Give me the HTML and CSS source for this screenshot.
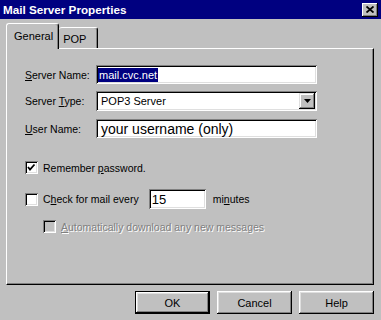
FILE: index.html
```html
<!DOCTYPE html>
<html>
<head>
<meta charset="utf-8">
<link rel="stylesheet" href="styles.css">
</head>
<body>
<div class="window">
  <div class="titlebar">
    <span class="title">Mail Server Properties</span>
    <div class="close"><svg width="8" height="7" viewBox="0 0 8 7"><path d="M0.5 0.5 L7.5 6.5 M7.5 0.5 L0.5 6.5" stroke="#000" stroke-width="1.8" fill="none"/></svg></div>
  </div>
  <div class="client">
    <div class="tabs">
      <div class="tab active">General</div>
      <div class="tab pop">POP</div>
    </div>
    <div class="panel">
      <div class="row r1">
        <span class="lbl"><u>S</u>erver Name:</span>
        <div class="field name"><span class="sel">mail.cvc.net</span></div>
      </div>
      <div class="row r2">
        <span class="lbl">Server <u>T</u>ype:</span>
        <div class="field select"><span>POP3 Server</span><div class="drop"><svg width="7" height="4" viewBox="0 0 7 4"><polygon points="0,0 7,0 3.5,4" fill="#000"/></svg></div></div>
      </div>
      <div class="row r3">
        <span class="lbl"><u>U</u>ser Name:</span>
        <div class="field user"><span>your username (only)</span></div>
      </div>
      <div class="check c1">
        <div class="box"><svg width="13" height="13" viewBox="0 0 13 13"><polyline points="3,6 5,8.5 9.5,3.5" stroke="#000" stroke-width="1.8" fill="none"/></svg></div>
        <span>Remember <u>p</u>assword.</span>
      </div>
      <div class="check c2">
        <div class="box"></div>
        <span>C<u>h</u>eck for mail every</span>
        <div class="field mins"><span>15</span></div>
        <span class="minutes">mi<u>n</u>utes</span>
      </div>
      <div class="check c3 disabled">
        <div class="box"></div>
        <span><u>A</u>utomatically download any new messages</span>
      </div>
    </div>
    <div class="buttons">
      <div class="btn default">OK</div>
      <div class="btn">Cancel</div>
      <div class="btn">Help</div>
    </div>
  </div>
</div>
</body>
</html>
```
FILE: styles.css
```css
* { box-sizing: border-box; }
body {
  margin: 0;
  width: 381px;
  height: 320px;
  overflow: hidden;
  background: #c0c0c0;
  font: 10.5px "Liberation Sans", Arial, sans-serif;
  color: #000;
}
.titlebar {
  height: 19px;
  background: #000080;
  display: flex;
  align-items: center;
  justify-content: space-between;
  padding: 0 3px 0 3px;
}
.title {
  color: #fff;
  font-weight: bold;
  font-size: 11.7px;
}
.close {
  width: 16px;
  height: 14px;
  background: #c0c0c0;
  box-shadow: inset -1px -1px #000, inset 1px 1px #fff, inset -2px -2px #808080;
  display: flex;
  align-items: center;
  justify-content: center;
  padding-bottom: 1px;
}
.client {
  padding: 4px 7px 0 6px;
}
.tabs {
  display: flex;
  align-items: flex-end;
  height: 25px;
}
.tab {
  border-top: 1px solid #fff;
  border-left: 1px solid #fff;
  border-right: 1px solid #000;
  border-radius: 3px 3px 0 0;
  box-shadow: inset -1px 0 #808080;
  background: #c0c0c0;
  display: flex;
  align-items: center;
  font-size: 11px;
}
.tab.active {
  height: 26px;
  margin-bottom: -1px;
  padding: 0 5px 2px 7px;
  position: relative;
  z-index: 1;
}
.tab.pop {
  height: 21px;
  border-left: none;
  padding: 1px 11px 0 4px;
}
.panel {
  width: 368px;
  height: 237px;
  border-top: 1px solid #fff;
  border-left: 1px solid #fff;
  border-right: 1px solid #000;
  border-bottom: 1px solid #000;
  box-shadow: inset -1px -1px #808080;
  padding: 16px 0 0 18px;
  display: flex;
  flex-direction: column;
}
.row {
  display: flex;
  align-items: center;
}
.r2 { margin-top: 7px; }
.r3 { margin-top: 8px; }
.lbl {
  width: 71px;
}
.field {
  background: #fff;
  box-shadow: inset 1px 1px #808080, inset -1px -1px #fff, inset 2px 2px #000, inset -2px -2px #dfdfdf;
  display: flex;
  align-items: center;
  width: 221px;
  height: 19px;
  padding-left: 5px;
  white-space: nowrap;
  overflow: hidden;
  font-size: 11px;
}
.field.name { padding-left: 2px; }
.sel {
  background: #000080;
  color: #fff;
  padding: 0 1px;
  line-height: 14px;
}
.field.select {
  height: 20px;
  justify-content: space-between;
  padding-right: 2px;
}
.drop {
  width: 16px;
  height: 16px;
  background: #c0c0c0;
  box-shadow: inset -1px -1px #000, inset 1px 1px #dfdfdf, inset -2px -2px #808080, inset 2px 2px #fff;
  display: flex;
  align-items: center;
  justify-content: center;
}
.field.user {
  font-size: 14px;
}
.check {
  display: flex;
  align-items: center;
  gap: 5px;
}
.box {
  width: 13px;
  height: 13px;
  flex: none;
  background: #fff;
  box-shadow: inset 1px 1px #808080, inset -1px -1px #fff, inset 2px 2px #000, inset -2px -2px #dfdfdf;
}
.box svg { display: block; }
.c1 { margin-top: 23px; height: 13px; }
.c2 { margin-top: 15px; height: 20px; }
.field.mins {
  width: 57px;
  height: 20px;
  margin-left: 5px;
  padding-left: 3px;
  font-size: 13px;
}
.minutes { margin-left: 2px; }
.c3 { margin-top: 11px; height: 13px; padding-left: 18px; }
.disabled { color: #808080; text-shadow: 1px 1px #fff; }
.disabled .box { background: #c0c0c0; }
.buttons {
  display: flex;
  justify-content: flex-end;
  gap: 7px;
  margin-top: 6px;
}
.btn {
  width: 75px;
  height: 23px;
  display: flex;
  align-items: center;
  justify-content: center;
  font-size: 11px;
  box-shadow: inset -1px -1px #000, inset 1px 1px #fff, inset -2px -2px #808080, inset 2px 2px #dfdfdf;
}
.btn.default {
  border: 1px solid #000;
}
```
